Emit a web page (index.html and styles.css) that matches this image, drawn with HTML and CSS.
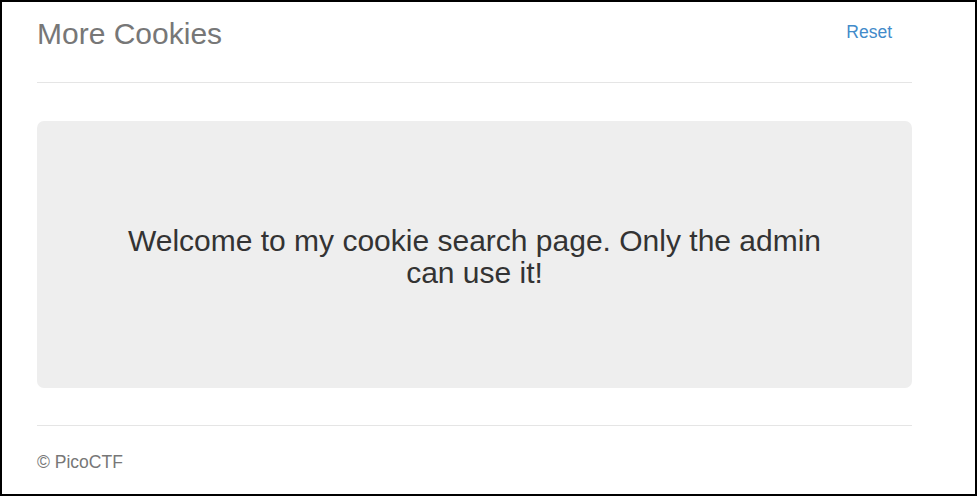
FILE: index.html
```html
<!DOCTYPE html>
<html lang="en">
<head>
<meta charset="utf-8">
<title>More Cookies</title>
<link rel="stylesheet" href="styles.css">
</head>
<body>
<div class="container">
  <header class="header">
    <h3 class="title">More Cookies</h3>
    <nav class="nav"><a class="nav-link" href="#">Reset</a></nav>
  </header>
  <main class="jumbotron">
    <p class="lead">Welcome to my cookie search page. Only the admin can use it!</p>
  </main>
  <footer class="footer">
    <p class="copy">&copy; PicoCTF</p>
  </footer>
</div>
</body>
</html>
```

FILE: styles.css
```css
html, body {
  margin: 0;
  padding: 0;
}
body {
  box-sizing: border-box;
  width: 977px;
  height: 496px;
  border: 2px solid #000;
  background: #fff;
  font-family: "Liberation Sans", Arial, Helvetica, sans-serif;
  font-size: 17.5px;
  line-height: 25px;
  color: #333;
  overflow: hidden;
}
.container {
  width: 875px;
  margin-left: 35px;
}
.header {
  display: flex;
  justify-content: space-between;
  align-items: flex-start;
  height: 66px;
  padding-top: 14px;
  border-bottom: 1px solid #e5e5e5;
}
.title {
  margin: 0;
  font-size: 30px;
  line-height: 36px;
  font-weight: normal;
  color: #777;
}
.nav {
  margin-top: 4px;
}
.nav-link {
  display: block;
  padding: 0 20px 0 19px;
  color: #428bca;
  text-decoration: none;
}
.jumbotron {
  margin-top: 38px;
  height: 267px;
  box-sizing: border-box;
  padding: 104px 60px 99px;
  background: #eee;
  border-radius: 7px;
  text-align: center;
}
.lead {
  margin: 0 auto;
  max-width: 720px;
  font-size: 30px;
  line-height: 32px;
  color: #333;
}
.footer {
  margin-top: 37px;
  padding-top: 24px;
  border-top: 1px solid #e5e5e5;
  color: #777;
}
.copy {
  margin: 0;
}
```
